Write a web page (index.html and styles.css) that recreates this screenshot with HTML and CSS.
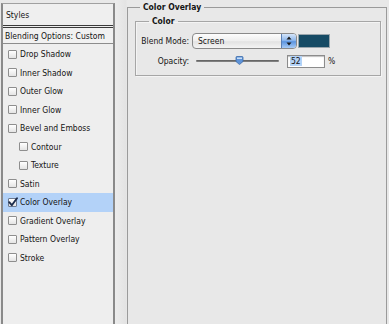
FILE: index.html
```html
<!DOCTYPE html>
<html>
<head>
<meta charset="utf-8">
<link rel="stylesheet" href="styles.css">
</head>
<body>
<div class="app">
  <aside class="styles-panel">
    <div class="panel-head">Styles</div>
    <div class="panel-blend">Blending Options: Custom</div>
    <ul class="fx-list">
      <li class="fx"><span class="cb"></span>Drop Shadow</li>
      <li class="fx"><span class="cb"></span>Inner Shadow</li>
      <li class="fx"><span class="cb"></span>Outer Glow</li>
      <li class="fx"><span class="cb"></span>Inner Glow</li>
      <li class="fx"><span class="cb"></span>Bevel and Emboss</li>
      <li class="fx sub"><span class="cb"></span>Contour</li>
      <li class="fx sub"><span class="cb"></span>Texture</li>
      <li class="fx"><span class="cb"></span>Satin</li>
      <li class="fx active"><span class="cb checked"><svg class="tick" viewBox="0 0 10 10" width="10" height="10"><path d="M1.2 5.2 L3.8 8.2 L9 1.2" fill="none" stroke="#1c2c4c" stroke-width="1.9" stroke-linecap="round" stroke-linejoin="round"/></svg></span>Color Overlay</li>
      <li class="fx"><span class="cb"></span>Gradient Overlay</li>
      <li class="fx"><span class="cb"></span>Pattern Overlay</li>
      <li class="fx"><span class="cb"></span>Stroke</li>
    </ul>
  </aside>
  <main class="settings">
    <fieldset class="group outer">
      <legend>Color Overlay</legend>
      <fieldset class="group inner">
        <legend>Color</legend>
        <div class="row">
          <label class="lbl">Blend Mode:</label>
          <div class="select"><span class="select-text">Screen</span><span class="stepper"><svg viewBox="0 0 14 14" width="14" height="14"><path d="M7 2.5 L9.5 5.5 L4.5 5.5 Z M7 11.5 L9.5 8.5 L4.5 8.5 Z" fill="#1a1a1a"/></svg></span></div>
          <span class="swatch"></span>
        </div>
        <div class="row row2">
          <label class="lbl">Opacity:</label>
          <div class="slider"><span class="knob"><svg viewBox="0 0 9 9" width="9" height="9"><path d="M1 1.5 Q1 0.5 2 0.5 L7 0.5 Q8 0.5 8 1.5 L8 5.5 L4.5 8.6 L1 5.5 Z" fill="#5e93d8" stroke="#3b6aa8" stroke-width="0.8"/><path d="M2 1.5 L7 1.5 L7 3 L2 3 Z" fill="#c9def7"/></svg></span></div>
          <span class="num"><span class="sel">52</span></span>
          <span class="pct">%</span>
        </div>
      </fieldset>
    </fieldset>
  </main>
</div>
</body>
</html>
```
FILE: styles.css
```css
html, body {
  margin: 0;
  padding: 0;
}
body {
  width: 389px;
  height: 324px;
  overflow: hidden;
  background: #e8e8e8;
  font-family: "DejaVu Sans Condensed", "DejaVu Sans", sans-serif;
  font-size: 8.5px;
  color: #141414;
}
.app {
  display: flex;
  height: 324px;
}
.styles-panel {
  flex: none;
  width: 110px;
  height: 320px;
  margin: 3px 0 0 1px;
  border-left: 2px solid #8a8a8a;
  border-right: 2px solid #8a8a8a;
  border-top: 1px solid #a0a0a0;
  background: #eeeeee;
}
.panel-head {
  height: 21px;
  display: flex;
  align-items: center;
  padding-left: 3px;
  border-bottom: 3px double #3a3a3a;
  background: #efefef;
}
.panel-blend {
  height: 15px;
  display: flex;
  align-items: center;
  padding-left: 2px;
  border-bottom: 1px solid #8c8c8c;
  background: #f1f1f1;
}
.fx-list {
  list-style: none;
  margin: 0;
  padding: 1px 0 0 0;
}
.fx {
  height: 18.5px;
  display: flex;
  align-items: center;
  padding-left: 5px;
}
.fx.sub {
  padding-left: 16px;
}
.fx.active {
  background: #b3d2f8;
}
.cb {
  position: relative;
  flex: none;
  width: 9px;
  height: 9px;
  box-sizing: border-box;
  margin-right: 3px;
  border: 1px solid #8e8e8e;
  border-radius: 1px;
  background: linear-gradient(#ffffff, #e4e4e4);
}
.cb.checked {
  border-color: #6d7a90;
}
.tick {
  position: absolute;
  left: -1px;
  top: -2px;
}
.settings {
  flex: 1;
  min-width: 0;
  padding: 0 2px 0 12px;
  background: linear-gradient(to right, #ececec 0, #e3e3e3 11px, #e8e8e8 12px);
}
.group {
  margin: 0;
  min-width: 0;
}
.group > legend {
  font-weight: bold;
  line-height: 12px;
  padding: 0 3px;
}
.outer {
  box-sizing: border-box;
  margin-top: 1px;
  height: 323px;
  border: 1px solid #9a9a9a;
  border-bottom: none;
  padding: 2px 5px 0 7px;
  background: #e8e8e8;
}
.outer > legend {
  margin-left: 5px;
}
.inner {
  border: 1px solid #a6a6a6;
  box-shadow: inset 1px 1px 0 #f4f4f4, 1px 1px 0 #f4f4f4;
  padding: 6px 0 7px 0;
}
.inner > legend {
  margin-left: 13px;
}
.row {
  display: flex;
  align-items: center;
  height: 16px;
}
.row2 {
  height: 14px;
  margin-top: 5px;
}
.lbl {
  flex: none;
  width: 53px;
  text-align: right;
}
.select {
  flex: none;
  display: flex;
  width: 105px;
  height: 16px;
  box-sizing: border-box;
  margin-left: 3px;
  border: 1px solid #8a8a8a;
  border-radius: 4px;
  overflow: hidden;
  background: linear-gradient(#fdfdfd, #eeeeee 50%, #e2e2e2 55%, #f4f4f4);
}
.select-text {
  flex: 1;
  display: flex;
  align-items: center;
  padding-left: 5px;
}
.stepper {
  flex: none;
  width: 14px;
  display: flex;
  align-items: center;
  justify-content: center;
  border-left: 1px solid #5a7fb4;
  background: linear-gradient(#d4e5fa, #8fb8ec 45%, #5c95e0 55%, #a8cbf5);
}
.swatch {
  flex: none;
  width: 30px;
  height: 12px;
  margin-left: 2px;
  background: #164b65;
  box-shadow: 0 0 0 1px #9aa6ad;
}
.slider {
  position: relative;
  flex: none;
  width: 83px;
  height: 2px;
  margin-left: 7px;
  background: linear-gradient(#5a5a5a, #8c8c8c);
  border-radius: 1px;
}
.knob {
  position: absolute;
  left: 39px;
  top: -4px;
  width: 9px;
  height: 9px;
}
.knob svg {
  display: block;
}
.num {
  flex: none;
  display: flex;
  align-items: center;
  width: 38px;
  height: 13px;
  box-sizing: border-box;
  margin-left: 8px;
  padding-left: 2px;
  border: 1px solid #8c8c8c;
  background: #ffffff;
  box-shadow: inset 0 1px 1px rgba(0, 0, 0, 0.25);
}
.sel {
  background: #b4d3f8;
  padding: 0 1px;
  line-height: 10px;
}
.pct {
  margin-left: 3px;
}
```
